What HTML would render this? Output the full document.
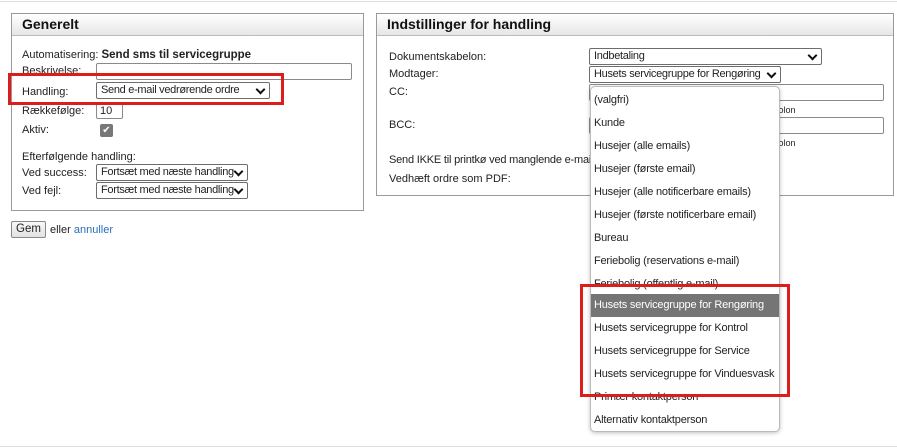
<!DOCTYPE html>
<html><head><meta charset="utf-8"><style>
*{box-sizing:border-box;margin:0;padding:0}
body{width:897px;height:448px;background:#fff;font-family:"Liberation Sans",sans-serif;font-size:11px;color:#222;position:relative;overflow:hidden}
.a{position:absolute;white-space:nowrap}
.panel{position:absolute;border:1px solid #9a9a9a;background:#fff}
.hd{position:absolute;left:0;top:0;right:0;height:22px;background:linear-gradient(#fff,#e6e6e6);border-bottom:1px solid #bbb;font-weight:bold;font-size:14px;padding:2px 0 0 10px;color:#111}
.inp{position:absolute;border:1px solid #8a8a8a;border-radius:2px;background:#fff;height:17px}
.sel{position:absolute;border:1px solid #6d6d6d;border-radius:2px;background:#fff;height:17px;padding:1px 14px 0 4px;font-size:11px;white-space:nowrap;overflow:hidden;letter-spacing:-0.3px}
.sel:after{content:"";position:absolute;right:5px;top:3px;width:5px;height:5px;border-right:2px solid #111;border-bottom:2px solid #111;transform:rotate(45deg);background:#fff}
.red{position:absolute;border:3px solid #dd1c1c}
.dd{position:absolute;left:590px;top:86px;width:190px;height:346px;background:#fff;border:1px solid #bbb;border-radius:5px;box-shadow:0 1px 4px rgba(0,0,0,.25);overflow:hidden}
.it{position:absolute;left:0;width:190px;height:23px;padding:5px 0 0 3px;font-size:11px;white-space:nowrap;overflow:hidden;letter-spacing:-0.2px}
</style></head><body>
<div class="a" style="left:0;top:1px;width:897px;height:1px;background:#ddd"></div>
<div class="a" style="left:0;top:446px;width:897px;height:1px;background:#ddd"></div>

<div class="panel" style="left:11px;top:13px;width:353px;height:198px">
<div class="hd">Generelt</div></div>
<div class="a" style="left:22px;top:49px">Automatisering: <b style="font-size:11.5px">Send sms til servicegruppe</b></div>
<div class="a" style="left:22px;top:65px">Beskrivelse:</div>
<div class="inp" style="left:96px;top:63px;width:256px"></div>
<div class="a" style="left:22px;top:86px">Handling:</div>
<div class="sel" style="left:96px;top:82px;width:174px">Send e-mail vedrørende ordre</div>
<div class="a" style="left:22px;top:105px">Rækkefølge:</div>
<div class="inp" style="left:96px;top:103px;width:27px;height:16px;padding:1px 0 0 3px">10</div>
<div class="a" style="left:22px;top:124px">Aktiv:</div>
<div class="a" style="left:100px;top:124px;width:13px;height:13px;background:#777;border-radius:2px;color:#fff;font-size:10px;text-align:center;line-height:13px">✔</div>
<div class="a" style="left:22px;top:151px">Efterfølgende handling:</div>
<div class="a" style="left:22px;top:167px">Ved success:</div>
<div class="sel" style="left:96px;top:164px;width:152px">Fortsæt med næste handling</div>
<div class="a" style="left:22px;top:185px">Ved fejl:</div>
<div class="sel" style="left:96px;top:182px;width:152px">Fortsæt med næste handling</div>
<div class="a" style="left:11px;top:221px;width:35px;height:17px;border:1px solid #888;border-radius:2px;background:linear-gradient(#f8f8f8,#e2e2e2);text-align:center;line-height:15px;font-size:11.5px">Gem</div>
<div class="a" style="left:50px;top:224px">eller <span style="color:#2a6ebb">annuller</span></div>
<div class="red" style="left:8px;top:73px;width:276px;height:32px"></div>

<div class="panel" style="left:376px;top:13px;width:518px;height:183px">
<div class="hd">Indstillinger for handling</div></div>
<div class="a" style="left:389px;top:51px">Dokumentskabelon:</div>
<div class="sel" style="left:589px;top:48px;width:233px">Indbetaling</div>
<div class="a" style="left:389px;top:68px">Modtager:</div>
<div class="sel" style="left:589px;top:66px;width:192px">Husets servicegruppe for Rengøring</div>
<div class="a" style="left:389px;top:86px">CC:</div>
<div class="inp" style="left:589px;top:84px;width:295px"></div>
<div class="a" style="left:772px;top:105px;font-size:9px">ikolon</div>
<div class="a" style="left:389px;top:119px">BCC:</div>
<div class="inp" style="left:589px;top:117px;width:295px"></div>
<div class="a" style="left:772px;top:138px;font-size:9px">ikolon</div>
<div class="a" style="left:389px;top:154px;letter-spacing:-0.2px">Send IKKE til printkø ved manglende e-mail:</div>
<div class="a" style="left:389px;top:173px">Vedhæft ordre som PDF:</div>

<div class="dd">
<div class="it" style="top:2px">(valgfri)</div>
<div class="it" style="top:25px">Kunde</div>
<div class="it" style="top:48px">Husejer (alle emails)</div>
<div class="it" style="top:71px">Husejer (første email)</div>
<div class="it" style="top:94px">Husejer (alle notificerbare emails)</div>
<div class="it" style="top:117px">Husejer (første notificerbare email)</div>
<div class="it" style="top:140px">Bureau</div>
<div class="it" style="top:163px">Feriebolig (reservations e-mail)</div>
<div class="it" style="top:186px">Feriebolig (offentlig e-mail)</div>
<div class="it" style="top:207px;background:#757575;color:#fff;left:-1px;padding-left:4px">Husets servicegruppe for Rengøring</div>
<div class="it" style="top:230px">Husets servicegruppe for Kontrol</div>
<div class="it" style="top:253px">Husets servicegruppe for Service</div>
<div class="it" style="top:276px">Husets servicegruppe for Vinduesvask</div>
<div class="it" style="top:299px">Primær kontaktperson</div>
<div class="it" style="top:322px">Alternativ kontaktperson</div>
</div>
<div class="red" style="left:580px;top:284px;width:210px;height:113px"></div>
</body></html>
